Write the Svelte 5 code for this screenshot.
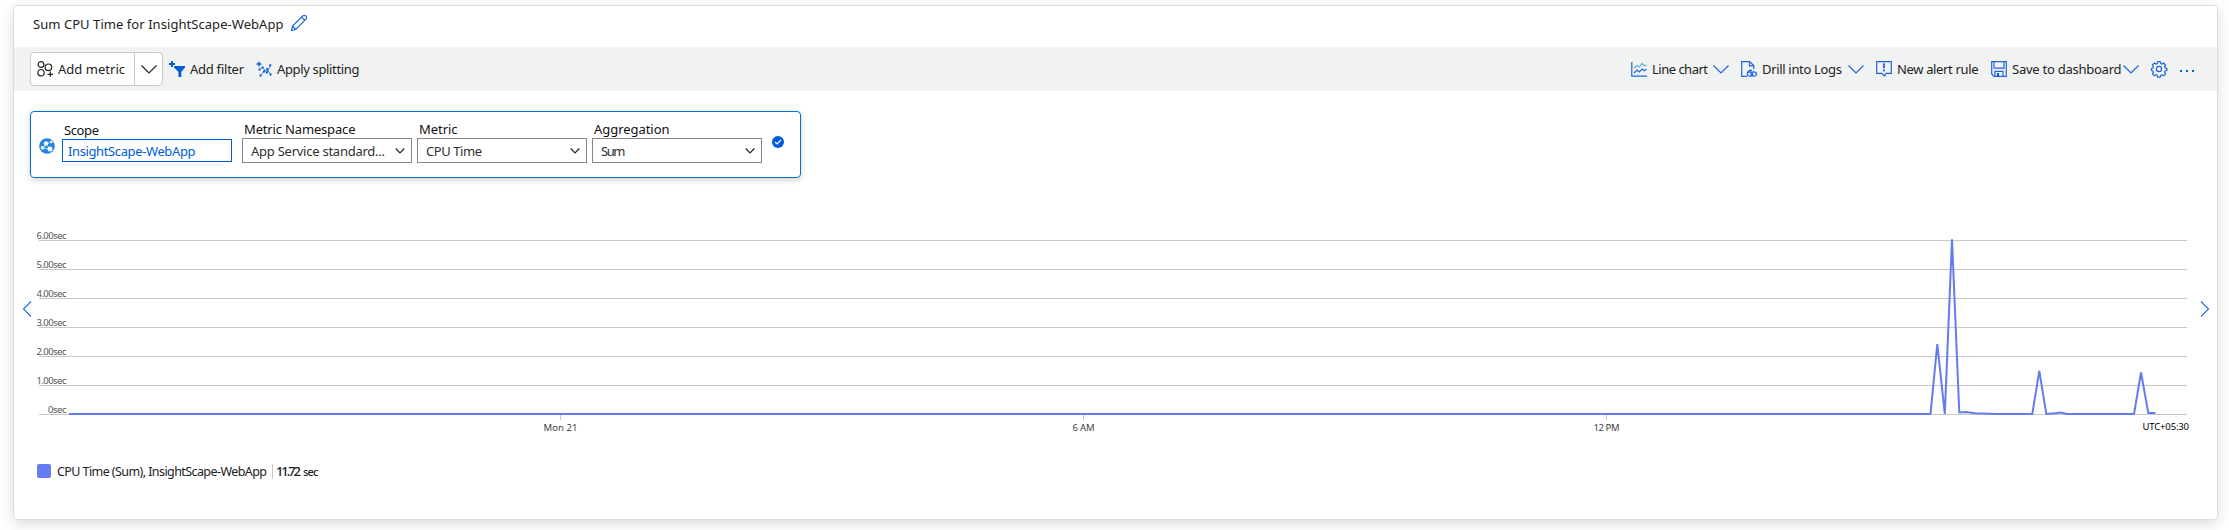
<script>
  const grid = [6, 5, 4, 3, 2, 1, 0].map((v, i) => ({
    y: 240.5 + i * 29,
    label: v ? `${v}.00sec` : '0sec',
    x: v ? 36.5 : 48,
    w: v ? 30 : 18.5
  }));
  const ticks = [
    { x: 560.5, label: 'Mon 21', w: 34 },
    { x: 1083.5, label: '6 AM', w: 22 },
    { x: 1606.5, label: '12 PM', w: 26 }
  ];
  const selects = [
    { label: 'Metric Namespace', value: 'App Service standard...', lw: 111.5, vw: 134 },
    { label: 'Metric', value: 'CPU Time', lw: 38.5, vw: 56 },
    { label: 'Aggregation', value: 'Sum', lw: 75.5, vw: 24.5 }
  ];
</script>

{#snippet label(text, width, size = 13)}
  <svg class="label" width={width} height="20" style:font-size="{size}px">
    <text x="0" y="15" textLength={width} lengthAdjust="spacing">{text}</text>
  </svg>
{/snippet}

{#snippet chevron()}
  <svg class="chev" width="16" height="16" viewBox="0 0 16 16"><path d="M.5 4.5 8 12l7.5-7.5" /></svg>
{/snippet}

<main class="card">
  <header>
    {@render label('Sum CPU Time for InsightScape-WebApp', 250.5)}
    <svg class="pencil" width="18" height="18" viewBox="0 0 18 18"><path d="m1.5 16.5 1.1-4.4L12.7 2a2.2 2.2 0 0 1 3.2 3.2L5.8 15.4ZM2.6 12.1l3.2 3.3M11.5 3.2l3.2 3.2" /></svg>
  </header>

  <nav class="toolbar">
    <div class="split">
      <div class="metric">
        <svg width="16" height="16" viewBox="0 0 16 16" class="dark"><circle cx="4" cy="3.5" r="2.9" /><circle cx="4" cy="11.7" r="3.2" /><circle cx="11.4" cy="6.3" r="3.3" /><path d="M13.3 10.5v5.5M10.5 13.3h5.5" /></svg>
        {@render label('Add metric', 67)}
      </div>
      <div class="drop">{@render chevron()}</div>
    </div>
    <div class="item filter">
      <svg width="16" height="16" viewBox="0 0 16 16"><path class="solid" d="M5 5h11v1.5L12.3 11v5H9.5v-5L5 6.5Z" /><path class="plus" d="M3 0v6M0 3h6" /></svg>
      {@render label('Add filter', 54)}
    </div>
    <div class="item splitting">
      <svg width="16" height="16" viewBox="0 0 16 16"><path class="plus thin" d="M3 .5v5M.5 3h5" /><path class="dots" d="m3.5 8.5 3-2 4.5 5 3.5-7.5M4.5 14.5l3.5-4 3-2 3.5 4.5" /><path class="solid" d="M2.5 7.5h2v2h-2zM5.7 5.5h2v2h-2zM9.8 10.5h2v2h-2zM13.3 3.3h2v2h-2zM3.5 13.5h2v2h-2zM7 9.5h2v2H7zM10.3 7.2h2v2h-2zM13.5 12.5h2v2h-2z" /></svg>
      {@render label('Apply splitting', 82.5)}
    </div>

    <div class="item line">
      <svg width="16" height="16" viewBox="0 0 16 16"><path class="axis" d="M.8 1v14.2H16" /><path class="teal" d="m3 7.5 3-3 2.3 1.5L11 2.5l2.3 2.3L15.5 4" /><path d="m3 12 3-3 2.2 2 3-3 2 1.8L15.5 8" /></svg>
      {@render label('Line chart', 56)}
    </div>
    <div class="c1">{@render chevron()}</div>
    <div class="item">
      <svg width="16" height="16" viewBox="0 0 16 16"><path d="M6 15.4H.7V.6h8l4 4v3.6M8.5.8v4h4" /><ellipse cx="9" cy="13" rx="2.7" ry="2.2" /><ellipse cx="12.7" cy="13" rx="2.7" ry="2.2" /><path d="M6.5 11.5 9 9.2l2 .3" /></svg>
      {@render label('Drill into Logs', 80)}
    </div>
    <div class="c2">{@render chevron()}</div>
    <div class="item">
      <svg width="16" height="16" viewBox="0 0 16 16"><path d="M.7.7h14.6v11.6H10L8.7 15l-3-2.7h-5Z" /><path class="mark" d="M8 2.3v4.9M8 8.6v1.8" /></svg>
      {@render label('New alert rule', 81.5)}
    </div>
    <div class="item save">
      <svg width="16" height="16" viewBox="0 0 16 16"><path d="M.7.7h14.6v14.6H3L.7 13ZM3 .7v6.5h10V.7M4 15.3v-5h8v5" /><path class="solid" d="M6 12h2v3.5H6z" /></svg>
      {@render label('Save to dashboard', 109.5)}
    </div>
    {@render chevron()}
    <svg class="gear" width="16" height="16" viewBox="0 0 16 16"><path d="M6.7.7h2.6l.5 1.9 1.2.5 1.7-1 1.9 1.9-1 1.7.5 1.2 1.8.5v2l-1.8.6-.5 1.2 1 1.7-1.9 1.9-1.7-1-1.2.5-.5 1.9H6.7l-.5-1.9-1.2-.5-1.7 1-1.9-1.9 1-1.7L1.9 10 .5 9.5v-2L1.9 7l.5-1.3-1-1.7 1.9-1.9 1.7 1 1.2-.5Z" /><circle cx="8" cy="8" r="2.6" /></svg>
    <svg class="more" width="16" height="16" viewBox="0 0 16 16"><path class="solid" d="M1 9h2v2H1zM7 9h2v2H7zM13 9h2v2h-2z" /></svg>
  </nav>

  <section class="query">
    <svg class="globe" width="16" height="16" viewBox="0 0 16 16"><circle cx="8" cy="8" r="7.8" fill="#2583d9" /><path d="m4 10 3-4 5-2M7 6l4 5M4 10l7 1" stroke="#9bd5f5" stroke-width="1" fill="none" /><circle cx="7" cy="5.5" r="2.3" fill="#f3f8fc" /><circle cx="3.6" cy="9.8" r="2" fill="#dceefa" /><circle cx="11" cy="10.9" r="2.5" fill="#f0f8fd" /><circle cx="12.3" cy="4" r="1.4" fill="#d4edfb" /></svg>
    <div class="field scope">
      {@render label('Scope', 35)}
      <div class="box">{@render label('InsightScape-WebApp', 127.5)}</div>
    </div>
    {#each selects as s}
      <div class="field">
        {@render label(s.label, s.lw)}
        <div class="box">
          {@render label(s.value, s.vw)}
          <svg class="caret" width="10" height="8" viewBox="0 0 10 8"><path d="m.7 1.5 4.3 4.3 4.3-4.3" /></svg>
        </div>
      </div>
    {/each}
    <svg class="check" width="12" height="12" viewBox="0 0 12 12"><circle cx="6" cy="6" r="6" fill="#015cda" /><path d="m3 6 2.1 2L9 4" stroke="#fff" stroke-width="1.2" fill="none" /></svg>
  </section>

  <svg class="chart" width="2203" height="240" viewBox="14 205 2203 240">
    {#each grid as g}
      <path class="rule" d="M39 {g.y}H2187" />
      <text class="y" x={g.x} y={g.y - 1.5} textLength={g.w}>{g.label}</text>
    {/each}
    {#each ticks as t}
      <path class="rule" d="M{t.x} 415v5" />
      <text class="x" x={t.x - t.w / 2} y="430.5" textLength={t.w}>{t.label}</text>
    {/each}
    <path class="series" d="M69 414H1930.5L1937.3 344.2 1944.8 414 1952 239.3 1959.3 412.5 1966 412 1975 413.2 1996 414H2032.3L2039.3 370.8 2046.3 414 2055 413.3 2061 412.5 2067 414H2134L2141 372.5 2148.3 413 2155.5 413" />
    <text class="utc" x="2142.5" y="430" textLength="46.5">UTC+05:30</text>
    <path class="arrow" d="m31 301.5-7.5 7.5 7.5 7.5M2201 301.5l7.5 7.5-7.5 7.5" />
  </svg>

  <footer>
    <i></i>
    {@render label('CPU Time (Sum), InsightScape-WebApp', 210, 12.5)}
    <b>{@render label('11.72', 25, 13)}{@render label('sec', 15.5, 11)}</b>
  </footer>
</main>

<style>
  :global(body) { background: #fff; }
  main { box-sizing: border-box; width: 2205px; height: 515px; margin: 5px 0 0 13px; border: 1px solid #dcdcdc; border-radius: 4px; box-shadow: 0 4px 14px rgba(0, 0, 0, .14); font-family: "Noto Sans", "Open Sans", sans-serif; color: #222; }
  :global(#app) { display: flow-root; height: 530px; overflow: hidden; }
  svg { display: block; flex: none; overflow: visible; fill: none; stroke: #1f65dc; stroke-width: 1.2; }
  text { fill: currentColor; stroke: none; }
  header { height: 41px; display: flex; padding: 3px 0 0 19px; box-sizing: border-box; }
  header .label, header > :global(svg.label) { margin-top: 5px; }
  .pencil { margin: 5px 0 0 6px; }
  .toolbar { height: 44px; background: #f1f3f2; display: flex; align-items: center; padding: 0 22px 0 16px; }
  .split { box-sizing: border-box; width: 133px; height: 34px; display: flex; border: 1px solid #c9cbca; border-radius: 4px; background: #fff; }
  .metric { box-sizing: border-box; width: 104px; display: flex; align-items: center; gap: 5px; padding-left: 6px; border-right: 1px solid #c9cbca; }
  .drop { flex: 1; display: grid; place-items: center; }
  .drop > :global(svg) { stroke: #222; }
  .dark { stroke: #222; }
  .item { display: flex; align-items: center; gap: 5px; }
  .filter { margin-left: 6px; }
  .splitting { margin-left: 12px; }
  .line { margin-left: auto; }
  .c1 { margin: 0 12px 0 5px; }
  .c2 { margin: 0 12px 0 6px; }
  .save { margin: 0 1.5px 0 13px; }
  .gear { margin-left: 12px; }
  .more { margin-left: 12px; }
  .solid { fill: #015cda; stroke: none; }
  .plus { stroke: #015cda; stroke-width: 2; }
  .thin { stroke-width: 1.3; }
  .dots { stroke-width: .8; }
  .teal { stroke: #59b4d9; }
  .mark { stroke-width: 1.8; }
  .query { box-sizing: border-box; width: 771px; height: 67px; margin: 20px 0 0 16px; padding: 5px 0 0 8px; display: flex; border: 1px solid #0070c8; border-radius: 4px; box-shadow: 0 2px 6px rgba(0, 0, 0, .18); }
  .globe { margin: 21px 7px 0 0; stroke: none; }
  .field { width: 170px; margin-right: 5px; padding-top: 2px; color: #111; }
  .field > :global(svg) { margin-left: 2px; }
  .scope { margin-right: 10px; }
  .scope > :global(svg) { margin-top: 1px; }
  .box { box-sizing: border-box; width: 170px; height: 25px; border: 1px solid #8a8886; display: flex; align-items: center; justify-content: space-between; padding: 0 6px 0 8px; color: #2f2f2f; margin-top: -1px; }
  .box > :global(svg.label) { margin-top: 1px; }
  .scope .box { height: 23px; border-color: #015cda; color: #015cda; padding-left: 5px; }
  .caret { stroke: #222; }
  .check { margin: 19px 0 0 5px; stroke: none; }
  .chart { margin-top: 27px; }
  .rule { stroke: #c8c8c8; stroke-width: 1; }
  .y { font-size: 9.5px; fill: #555; }
  .x { font-size: 9.5px; fill: #444; }
  .utc { font-size: 9.5px; fill: #000; }
  .series { stroke: #637cef; stroke-width: 2; }
  .arrow { stroke: #2376e5; }
  footer { height: 20px; display: flex; align-items: center; padding-left: 23px; margin-top: 16px; }
  footer i { width: 14px; height: 14px; margin-right: 5.5px; background: #637cef; border-radius: 2px; }
  footer b { display: flex; gap: 2px; height: 15px; align-items: center; margin-left: 5.5px; padding-left: 3px; border-left: 1px solid #c8c8c8; font-weight: 500; }
</style>
